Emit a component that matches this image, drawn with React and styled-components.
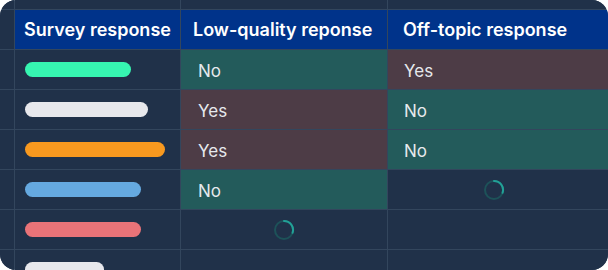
import React from "react";
import styled, { createGlobalStyle } from "styled-components";

const GlobalStyle = createGlobalStyle`
  html, body {
    margin: 0;
    padding: 0;
    background: #ffffff;
  }
  body {
    font-family: Inter, "Noto Sans", sans-serif;
  }
`;

// Palette for the review table
const colors = {
  line: "#33465d",
  cell: "#203149",
  header: "#00338a",
  yes: "#4d3c46",
  no: "#235b5b",
  text: "#e6e9ed",
};

const Card = styled.div`
  width: 608px;
  height: 270px;
  overflow: hidden;
  border-radius: 16px;
  background: ${colors.line};
`;

const Grid = styled.div`
  display: grid;
  grid-template-columns: 14px 165px 206px 1fr;
  grid-template-rows: 9px;
  grid-auto-rows: 39px;
  gap: 1px;
`;

const Cell = styled.div`
  background: ${colors.cell};
  display: flex;
  align-items: center;
  justify-content: ${(p) => (p.$center ? "center" : "flex-start")};
  padding-left: ${(p) => p.$pad || 0}px;
  padding-right: ${(p) => p.$padRight || 0}px;
  box-sizing: border-box;
`;

const HeaderCell = styled(Cell)`
  background: ${colors.header};
  color: #ffffff;
  font-size: 18px;
  font-weight: 600;
  white-space: nowrap;
`;

const AnswerCell = styled(Cell)`
  background: ${(p) => (p.$answer === "Yes" ? colors.yes : colors.no)};
  color: ${colors.text};
  font-size: 17px;
  padding-top: 3px;
`;

const Bar = styled.div`
  height: 15px;
  border-radius: 8px;
  background: ${(p) => p.$color};
`;

const Spinner = () => (
  <svg width="22" height="22" viewBox="0 0 22 22">
    <circle cx="11" cy="11" r="9" fill="none" stroke="#1d5259" strokeWidth="2" />
    <path
      d="M11 2 A9 9 0 0 1 19.6 13.8"
      fill="none"
      stroke="#22a197"
      strokeWidth="2"
      strokeLinecap="round"
    />
  </svg>
);

const columns = [
  { title: "Survey response", pad: 0, center: true },
  { title: "Low-quality reponse", pad: 12, body: 17, spin: 0 },
  { title: "Off-topic response", pad: 15, body: 16, spin: 8 },
];

const rows = [
  { color: "#36f5b1", width: 106, low: "No", off: "Yes" },
  { color: "#e7e8ec", width: 123, low: "Yes", off: "No" },
  { color: "#f8991f", width: 140, low: "Yes", off: "No" },
  { color: "#65a9e0", width: 116, low: "No", off: "loading" },
  { color: "#e97378", width: 116, low: "loading", off: null },
  { color: "#e7e8ec", width: 79, low: null, off: null },
];

function Verdict({ value, column }) {
  if (value === "loading") {
    return (
      <Cell $center $padRight={column.spin}>
        <Spinner />
      </Cell>
    );
  }
  if (!value) return <Cell />;
  return (
    <AnswerCell $answer={value} $pad={column.body}>
      {value}
    </AnswerCell>
  );
}

export default function App() {
  return (
    <>
      <GlobalStyle />
      <Card>
        <Grid>
          {/* spacer strip above the header */}
          <Cell />
          <Cell />
          <Cell />
          <Cell />

          <Cell />
          {columns.map((c) => (
            <HeaderCell key={c.title} $pad={c.pad} $center={c.center}>
              {c.title}
            </HeaderCell>
          ))}

          {rows.map((r, i) => (
            <React.Fragment key={i}>
              <Cell />
              <Cell $pad={10}>
                <Bar $color={r.color} style={{ width: r.width }} />
              </Cell>
              <Verdict value={r.low} column={columns[1]} />
              <Verdict value={r.off} column={columns[2]} />
            </React.Fragment>
          ))}
        </Grid>
      </Card>
    </>
  );
}
